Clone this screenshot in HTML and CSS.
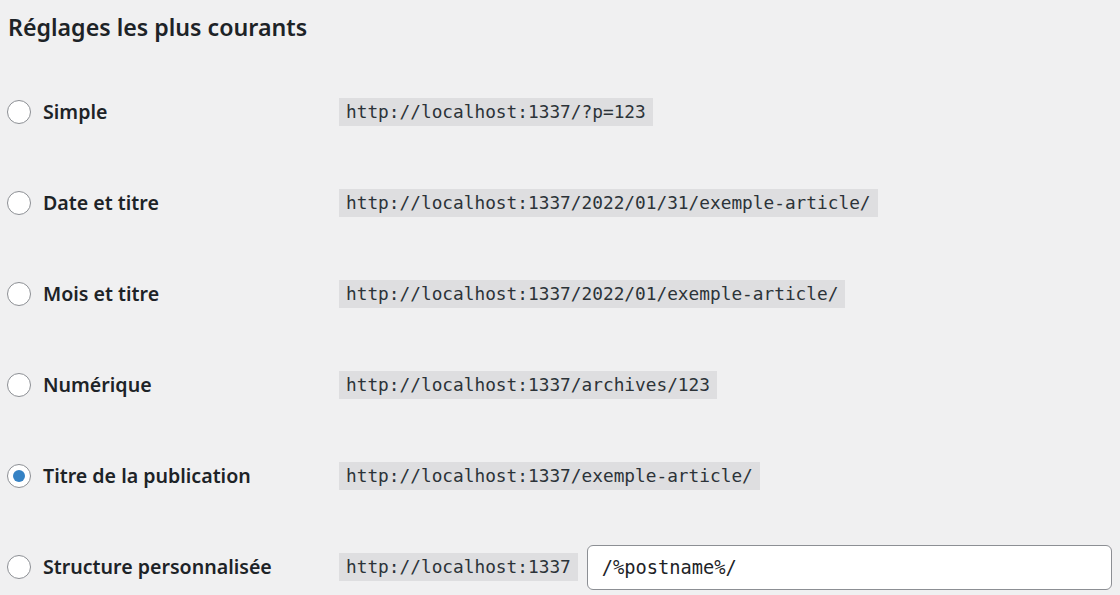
FILE: index.html
```
<!DOCTYPE html>
<html lang="fr">
<head>
    <meta charset="UTF-8">
    <title>Réglages des permaliens</title>
    <link rel="stylesheet" href="styles.css">
</head>
<body>
    <div class="wrap">
        <h2 class="title">Réglages les plus courants</h2>
        <div class="options">
            <div class="row">
                <label class="choice"><span class="radio"></span>Simple</label>
                <div class="value"><code>http://localhost:1337/?p=123</code></div>
            </div>
            <div class="row">
                <label class="choice"><span class="radio"></span>Date et titre</label>
                <div class="value"><code>http://localhost:1337/2022/01/31/exemple-article/</code></div>
            </div>
            <div class="row">
                <label class="choice"><span class="radio"></span>Mois et titre</label>
                <div class="value"><code>http://localhost:1337/2022/01/exemple-article/</code></div>
            </div>
            <div class="row">
                <label class="choice"><span class="radio"></span>Numérique</label>
                <div class="value"><code>http://localhost:1337/archives/123</code></div>
            </div>
            <div class="row">
                <label class="choice"><span class="radio checked"></span>Titre de la publication</label>
                <div class="value"><code>http://localhost:1337/exemple-article/</code></div>
            </div>
            <div class="row">
                <label class="choice"><span class="radio"></span>Structure personnalisée</label>
                <div class="value">
                    <code>http://localhost:1337</code>
                    <input type="text" class="custom" value="/%postname%/">
                </div>
            </div>
        </div>
    </div>
</body>
</html>
```

FILE: styles.css
```
body {
    margin: 0;
    padding: 0;
    background-color: #f0f0f1;
    font-family: "Noto Sans", "Open Sans", sans-serif;
    color: #1d2327;
}

.wrap {
    padding: 0 8px 0 7px;
}

.title {
    margin: 0;
    height: 66px;
    display: flex;
    align-items: center;
    padding-left: 1px;
    padding-bottom: 13px;
    box-sizing: border-box;
    font-size: 23.2px;
    font-weight: 600;
}

.row {
    display: flex;
    align-items: center;
    height: 91px;
}

.choice {
    width: 332px;
    display: flex;
    align-items: center;
    gap: 12px;
    font-size: 19.6px;
    font-weight: 600;
}

.radio {
    width: 24px;
    height: 24px;
    box-sizing: border-box;
    border: 1px solid #8c8f94;
    border-radius: 50%;
    background-color: white;
    display: flex;
    align-items: center;
    justify-content: center;
    flex-shrink: 0;
}

.radio.checked::after {
    content: "";
    width: 12px;
    height: 12px;
    border-radius: 50%;
    background-color: #3582c4;
}

.value {
    display: flex;
    align-items: center;
    gap: 9px;
}

code {
    font-family: "DejaVu Sans Mono", monospace;
    font-size: 17.8px;
    line-height: 28px;
    padding: 0 7px;
    background-color: #dedee0;
    color: #2c3338;
}

.custom {
    width: 525px;
    height: 45px;
    box-sizing: border-box;
    margin-top: 2px;
    border: 1px solid #8c8f94;
    border-radius: 6px;
    background-color: white;
    padding: 0 14px;
    font-family: "DejaVu Sans Mono", monospace;
    font-size: 18.7px;
    color: #1d2327;
}
```
